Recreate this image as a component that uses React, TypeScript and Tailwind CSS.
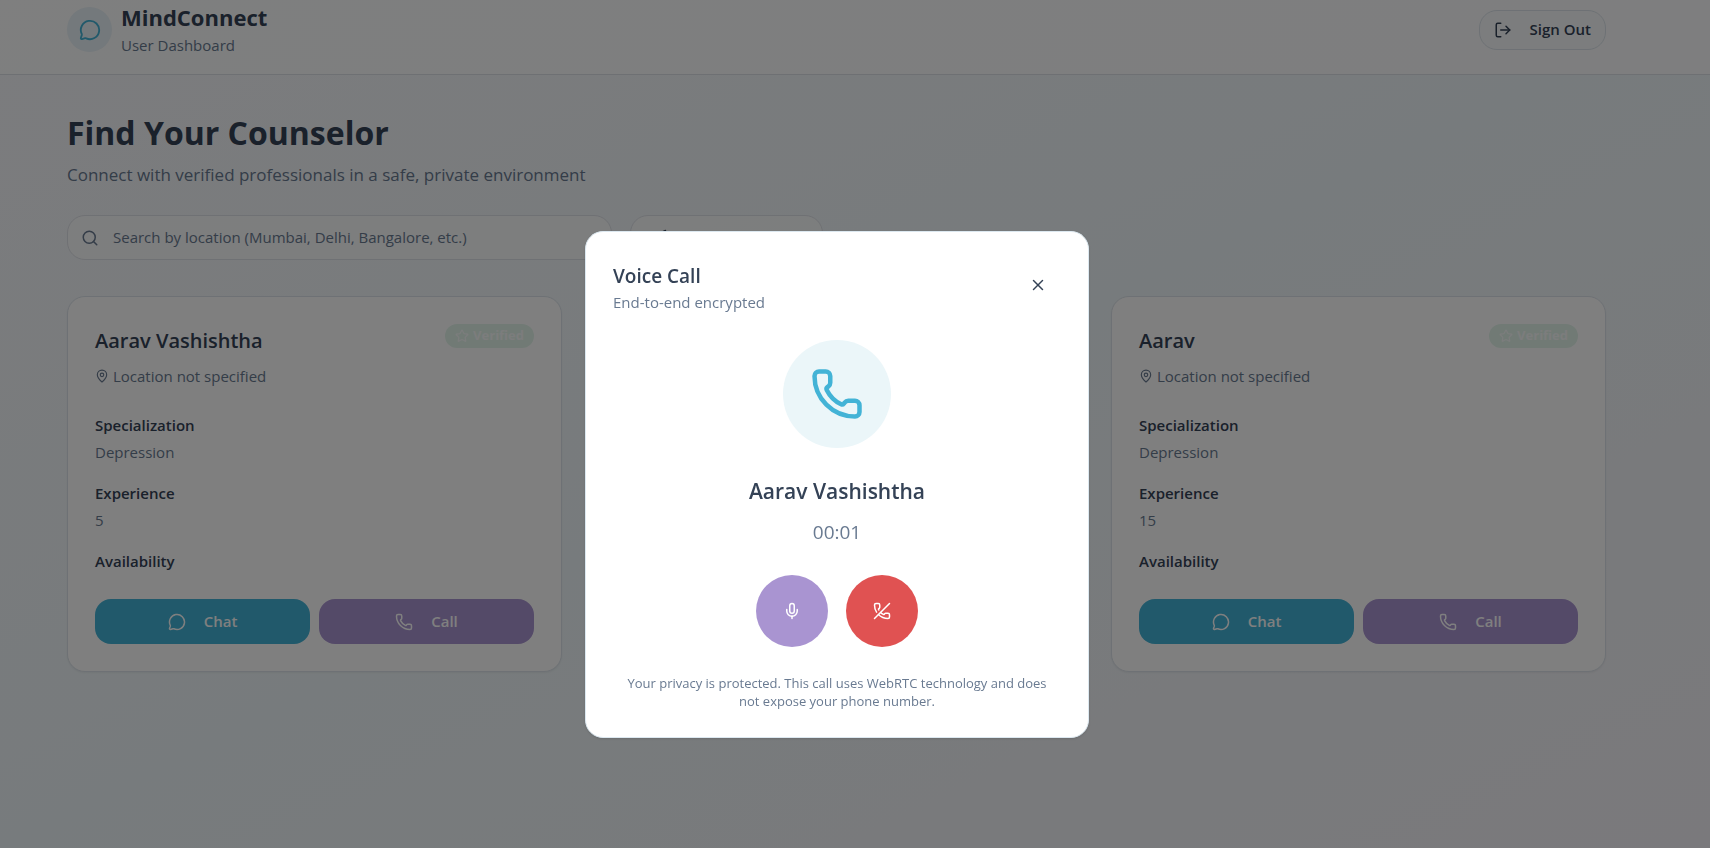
import { LogOut, MapPin, MessageCircle, Mic, Navigation, Phone, PhoneOff, Search, Star, X } from 'lucide-react'

interface Counselor {
  id: number
  name: string
  location: string
  specialization: string
  experience: string
}

const COUNSELORS: Counselor[] = [
  {
    id: 1,
    name: 'Aarav Vashishtha',
    location: 'Location not specified',
    specialization: 'Depression',
    experience: '5',
  },
  {
    id: 2,
    name: 'Aarav',
    location: 'Location not specified',
    specialization: 'Depression',
    experience: '15',
  },
]

function Header() {
  return (
    <header className="border-b border-[#dce0e6] bg-white/80 pr-[37px]">
      <div className="mx-auto flex max-w-[1575px] items-center justify-between px-[18px] pt-[2px] pb-[17px]">
        <div className="flex items-center gap-[9px]">
          <div className="flex size-[45px] items-center justify-center rounded-full bg-[#e8f2f8]">
            <MessageCircle className="size-[22px] text-[#43b3d6]" />
          </div>
          <div>
            <h1 className="text-[22px] leading-[31px] font-bold">MindConnect</h1>
            <p className="text-[15px] leading-[24px] text-[#697a91]">User Dashboard</p>
          </div>
        </div>
        <button className="flex h-10 items-center gap-[18px] rounded-[18px] border border-[#dce3ea] bg-[#f9fbfd] px-[14px] text-[15px] font-semibold">
          <LogOut className="size-[18px]" />
          Sign Out
        </button>
      </div>
    </header>
  )
}

function SearchBar() {
  return (
    <div className="mt-[26px] flex max-w-[756px] gap-[18px]">
      <label className="flex h-[45px] flex-1 items-center gap-[14px] rounded-[18px] border border-[#dfe2e8] bg-white/60 px-[13px] text-[#697a91]">
        <Search className="size-[18px] shrink-0" />
        <input
          type="text"
          aria-label="Search by location"
          placeholder="Search by location (Mumbai, Delhi, Bangalore, etc.)"
          className="min-w-0 flex-1 bg-transparent text-[15px] outline-none placeholder:text-[#697a91]"
        />
      </label>
      <button
        aria-label="Use my location"
        className="flex h-[45px] w-[193px] items-center rounded-[18px] border border-[#dfe2e8] bg-white/60 px-[18px]"
      >
        <Navigation className="size-[18px]" />
      </button>
    </div>
  )
}

function CounselorCard({ counselor }: { counselor: Counselor }) {
  return (
    <article className="rounded-[18px] border border-[#dce3ea] bg-white p-[27px] shadow-xs last:col-start-3">
      <div className="flex items-start justify-between">
        <div>
          <h3 className="text-[20px] leading-[33px] font-semibold">{counselor.name}</h3>
          <p className="mt-2 flex items-center gap-1 text-[15px] leading-[22px] text-[#697a91]">
            <MapPin className="size-[14px]" />
            {counselor.location}
          </p>
        </div>
        <span className="flex h-6 items-center gap-1 rounded-full bg-[#e3f5eb] px-[10px] text-[13px] font-bold text-[#f8fafa]">
          <Star className="size-[14px]" />
          Verified
        </span>
      </div>

      <dl className="mt-[27px] text-[15px] leading-[23px]">
        <dt className="font-semibold">Specialization</dt>
        <dd className="mt-1 text-[#697a91]">{counselor.specialization}</dd>
        <dt className="mt-[18px] font-semibold">Experience</dt>
        <dd className="mt-1 text-[#697a91]">{counselor.experience}</dd>
        <dt className="mt-[18px] font-semibold">Availability</dt>
      </dl>

      <div className="mt-[26px] grid grid-cols-2 gap-[9px] text-[15px] font-semibold text-white">
        <button className="flex h-[45px] items-center justify-center gap-[18px] rounded-[16px] bg-[#43b3d6]">
          <MessageCircle className="size-[18px]" />
          Chat
        </button>
        <button className="flex h-[45px] items-center justify-center gap-[18px] rounded-[16px] bg-[#a994d1]">
          <Phone className="size-[18px]" />
          Call
        </button>
      </div>
    </article>
  )
}

function VoiceCallModal() {
  return (
    <div className="fixed inset-0 flex items-center justify-center bg-black/50 pt-[120px] pr-9">
      <div
        role="dialog"
        aria-label="Voice Call"
        className="w-full max-w-[504px] rounded-[18px] border border-[#dce8f0] bg-white p-[27px] text-center shadow-sm"
      >
        <div className="flex items-center justify-between text-left">
          <div>
            <h2 className="text-[19px] leading-[34px] font-semibold">Voice Call</h2>
            <p className="text-[15px] leading-[18px] text-[#697a91]">End-to-end encrypted</p>
          </div>
          <button aria-label="Close" className="flex h-10 w-[46px] items-center justify-center rounded-[16px]">
            <X className="size-[18px]" />
          </button>
        </div>

        <div className="mx-auto mt-[29px] flex size-[108px] items-center justify-center rounded-full bg-[#ebf6f9]">
          <Phone className="size-[54px] text-[#43b3d6]" />
        </div>

        <h3 className="mt-[27px] text-[21px] leading-[32px] font-semibold">Aarav Vashishtha</h3>
        <p className="mt-[9px] text-[19px] leading-[32px] text-[#697a91]">00:01</p>

        <div className="mt-[27px] flex justify-center gap-[18px] text-white">
          <button aria-label="Mute" className="flex size-[72px] items-center justify-center rounded-full bg-[#a994d1]">
            <Mic className="size-[18px]" />
          </button>
          <button aria-label="End call" className="flex size-[72px] items-center justify-center rounded-full bg-[#e05252]">
            <PhoneOff className="size-[18px]" />
          </button>
        </div>

        <p className="mt-[27px] px-3 text-[13px] leading-[18px] text-[#697a91]">
          Your privacy is protected. This call uses WebRTC technology and does not expose your phone number.
        </p>
      </div>
    </div>
  )
}

export default function App() {
  return (
    <div className="min-h-screen bg-linear-to-br from-[#f8f8fc] via-[#eff7fa] to-[#f5f3f8] font-['Open_Sans',sans-serif] text-[#344256]">
      <Header />
      <main className="pr-[37px]">
        <div className="mx-auto max-w-[1575px] px-[18px] py-9">
          <h2 className="text-[32px] leading-[43px] font-bold">Find Your Counselor</h2>
          <p className="mt-[7px] text-[17px] leading-[28px] text-[#697a91]">
            Connect with verified professionals in a safe, private environment
          </p>
          <SearchBar />
          <div className="mt-9 grid grid-cols-3 gap-[27px]">
            {COUNSELORS.map((counselor) => (
              <CounselorCard key={counselor.id} counselor={counselor} />
            ))}
          </div>
        </div>
      </main>
      <VoiceCallModal />
    </div>
  )
}
